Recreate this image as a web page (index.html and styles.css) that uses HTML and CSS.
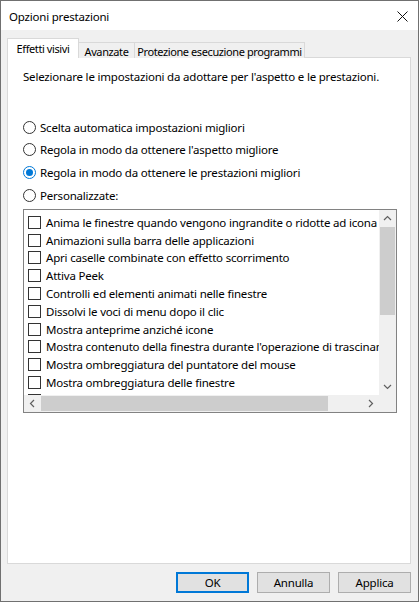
FILE: index.html
```html
<!DOCTYPE html>
<html lang="it">
<head>
  <meta charset="UTF-8" />
  <title>Opzioni prestazioni</title>
  <link rel="stylesheet" href="styles.css">
</head>
<body>

  <div class="window">
    <div class="titlebar">
      <span class="title">Opzioni prestazioni</span>
      <span class="close">
        <svg width="11" height="11" viewBox="0 0 11 11"><path d="M0.5 0.5 L10.5 10.5 M10.5 0.5 L0.5 10.5" stroke="#111" stroke-width="1" fill="none"/></svg>
      </span>
    </div>

    <div class="client">
      <div class="tabs">
        <div class="tab tab-active tab-effetti">Effetti visivi</div>
        <div class="tab tab-avanzate">Avanzate</div>
        <div class="tab tab-protezione">Protezione esecuzione programmi</div>
      </div>

      <div class="panel">
        <p class="intro">Selezionare le impostazioni da adottare per l'aspetto e le prestazioni.</p>

        <div class="options">
          <div class="radio-row"><span class="radio"></span>Scelta automatica impostazioni migliori</div>
          <div class="radio-row"><span class="radio"></span>Regola in modo da ottenere l'aspetto migliore</div>
          <div class="radio-row"><span class="radio radio-on"></span>Regola in modo da ottenere le prestazioni migliori</div>
          <div class="radio-row"><span class="radio"></span>Personalizzate:</div>
        </div>

        <div class="listbox">
          <div class="items">
            <div class="item"><span class="check"></span>Anima le finestre quando vengono ingrandite o ridotte ad icona</div>
            <div class="item"><span class="check"></span>Animazioni sulla barra delle applicazioni</div>
            <div class="item"><span class="check"></span>Apri caselle combinate con effetto scorrimento</div>
            <div class="item"><span class="check"></span>Attiva Peek</div>
            <div class="item"><span class="check"></span>Controlli ed elementi animati nelle finestre</div>
            <div class="item"><span class="check"></span>Dissolvi le voci di menu dopo il clic</div>
            <div class="item"><span class="check"></span>Mostra anteprime anziché icone</div>
            <div class="item"><span class="check"></span>Mostra contenuto della finestra durante l'operazione di trascinamento</div>
            <div class="item"><span class="check"></span>Mostra ombreggiatura del puntatore del mouse</div>
            <div class="item"><span class="check"></span>Mostra ombreggiatura delle finestre</div>
            <div class="item"><span class="check"></span>Mostra rettangolo di selezione traslucido</div>
          </div>

          <div class="vscroll">
            <div class="arrow">
              <svg width="17" height="17" viewBox="0 0 17 17"><path d="M5 10 L8.5 6.5 L12 10" stroke="#606060" stroke-width="1.2" fill="none"/></svg>
            </div>
            <div class="vtrack"><div class="vthumb"></div></div>
            <div class="arrow">
              <svg width="17" height="17" viewBox="0 0 17 17"><path d="M5 7 L8.5 10.5 L12 7" stroke="#606060" stroke-width="1.2" fill="none"/></svg>
            </div>
          </div>

          <div class="hscroll">
            <div class="arrow">
              <svg width="17" height="17" viewBox="0 0 17 17"><path d="M10 5 L6.5 8.5 L10 12" stroke="#606060" stroke-width="1.2" fill="none"/></svg>
            </div>
            <div class="htrack"><div class="hthumb"></div></div>
            <div class="arrow">
              <svg width="17" height="17" viewBox="0 0 17 17"><path d="M7 5 L10.5 8.5 L7 12" stroke="#606060" stroke-width="1.2" fill="none"/></svg>
            </div>
          </div>

          <div class="corner"></div>
        </div>
      </div>

      <div class="buttons">
        <button class="btn btn-default">OK</button>
        <button class="btn">Annulla</button>
        <button class="btn">Applica</button>
      </div>
    </div>
  </div>

</body>
</html>
```

FILE: styles.css
```css
body {
  margin: 0;
  padding: 0;
  font-family: 'Noto Sans', sans-serif;
  font-size: 11.5px;
  letter-spacing: -0.2px;
  color: #000;
  background: #f0f0f0;
}

.window {
  width: 419px;
  height: 602px;
  box-sizing: border-box;
  border: 1px solid #707070;
  display: flex;
  flex-direction: column;
  background: #f0f0f0;
}

.titlebar {
  height: 29px;
  flex: none;
  background: #fff;
  display: flex;
  align-items: center;
  justify-content: space-between;
  padding: 0 10px 0 8px;
}

.title {
  padding-top: 1px;
}

.close {
  display: flex;
  width: 11px;
  height: 11px;
  margin-top: 1px;
}

.client {
  flex: 1;
  display: flex;
  flex-direction: column;
  padding: 9px 7px 8px 6px;
  min-height: 0;
}

.tabs {
  display: flex;
  align-items: flex-end;
  height: 19px;
  margin-bottom: -1px;
  position: relative;
  z-index: 1;
}

.tab {
  box-sizing: border-box;
  height: 16px;
  border: 1px solid #d9d9d9;
  border-bottom: none;
  background: #f0f0f0;
  display: flex;
  align-items: center;
  justify-content: center;
  margin-left: -1px;
  white-space: nowrap;
  padding-top: 1px;
  font-size: 11px;
  letter-spacing: -0.4px;
}

.tab-active {
  height: 20px;
  background: #fff;
  margin-left: 0;
  padding-top: 0;
  padding-bottom: 1px;
}

.tab-effetti { width: 72px; }
.tab-avanzate { width: 57px; }
.tab-protezione { width: 171px; }

.panel {
  flex: 1;
  background: #fff;
  border: 1px solid #d9d9d9;
  padding: 11px 13px 0 15px;
  min-height: 0;
}

.intro {
  margin: 0;
  line-height: 16px;
  white-space: nowrap;
}

.options {
  margin-top: 31px;
  display: flex;
  flex-direction: column;
}

.radio-row {
  height: 22.6px;
  display: flex;
  align-items: center;
  white-space: nowrap;
}

.radio {
  box-sizing: border-box;
  width: 13px;
  height: 13px;
  border: 1px solid #333;
  border-radius: 50%;
  background: #fff;
  margin-right: 4px;
  flex: none;
  display: flex;
  align-items: center;
  justify-content: center;
}

.radio-on {
  border-color: #0078d7;
}

.radio-on::after {
  content: '';
  width: 7px;
  height: 7px;
  border-radius: 50%;
  background: #0078d7;
}

.listbox {
  margin-top: 3px;
  width: 374px;
  height: 204px;
  box-sizing: border-box;
  border: 1px solid #828282;
  display: grid;
  grid-template-columns: 1fr 17px;
  grid-template-rows: 1fr 17px;
  background: #fff;
}

.items {
  overflow: hidden;
  padding-top: 3px;
}

.item {
  height: 17.8px;
  display: flex;
  align-items: center;
  white-space: nowrap;
  padding-left: 4px;
}

.check {
  box-sizing: border-box;
  width: 13px;
  height: 13px;
  border: 1px solid #333;
  background: #fff;
  margin-right: 5px;
  flex: none;
}

.vscroll {
  background: #f0f0f0;
  display: flex;
  flex-direction: column;
}

.hscroll {
  background: #f0f0f0;
  display: flex;
}

.arrow {
  width: 17px;
  height: 17px;
  flex: none;
  display: flex;
}

.vtrack {
  flex: 1;
}

.vthumb {
  margin: 0 1px;
  height: 88px;
  background: #cdcdcd;
}

.htrack {
  flex: 1;
  display: flex;
}

.hthumb {
  margin: 1px 0;
  width: 287px;
  background: #cdcdcd;
}

.corner {
  background: #f0f0f0;
}

.buttons {
  display: flex;
  justify-content: flex-end;
  gap: 8px;
  margin-top: 8px;
  flex: none;
}

.btn {
  width: 73px;
  height: 21px;
  box-sizing: border-box;
  border: 1px solid #adadad;
  background: #e1e1e1;
  font-family: 'Noto Sans', sans-serif;
  font-size: 11.5px;
  letter-spacing: -0.2px;
  color: #000;
  padding: 0;
  margin: 0;
}

.btn-default {
  border-color: #0078d7;
  box-shadow: inset 0 0 0 1px #0078d7;
}
```
